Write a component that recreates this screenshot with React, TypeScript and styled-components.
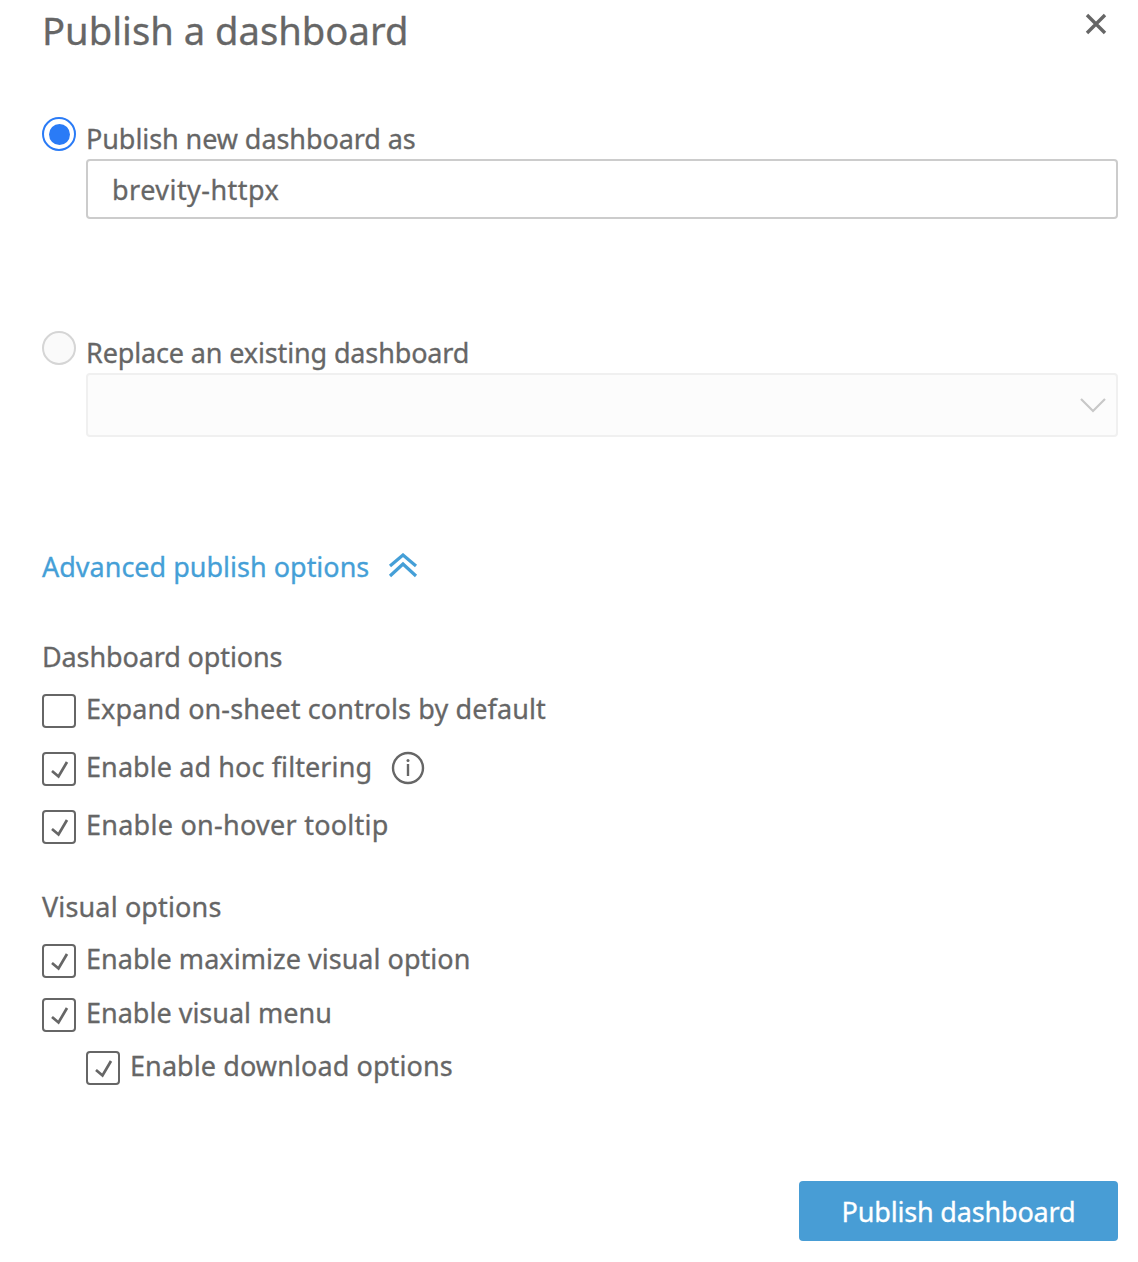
import React from "react";
import styled, { createGlobalStyle } from "styled-components";

const Global = createGlobalStyle`
  html, body { margin: 0; padding: 0; background: #fff; }
  body { font-family: "Noto Sans", "Open Sans", sans-serif; color: #666; -webkit-text-stroke: 0.3px currentColor; }
  button { -webkit-text-stroke: 0.3px currentColor; }
`;

const Page = styled.div`
  width: 1138px;
  height: 1262px;
  box-sizing: border-box;
  padding: 0 20px 0 42px;
  display: flex;
  flex-direction: column;
  overflow: hidden;
`;
const Header = styled.header`
  height: 62px;
  display: flex;
  justify-content: space-between;
  align-items: flex-start;
`;
const Title = styled.h1`
  margin: 0;
  font-size: 38.2px;
  line-height: 60px;
  font-weight: 400;
  color: #666;
`;
const CloseButton = styled.button`
  border: 0;
  background: none;
  padding: 0;
  margin: 13px 11px 0 0;
  width: 22px;
  height: 22px;
  display: block;
`;
const RadioBlock = styled.section<{ $top: number; $height: number }>`
  margin-top: ${(p) => p.$top}px;
  height: ${(p) => p.$height}px;
`;
const Row = styled.label`
  display: flex;
  align-items: flex-start;
  gap: 10px;
`;
const Radio = styled.span<{ $on?: boolean }>`
  width: 34px;
  height: 34px;
  box-sizing: border-box;
  border-radius: 50%;
  flex: none;
  border: 2px solid ${(p) => (p.$on ? "#2a7bf6" : "#d5d5d5")};
  background: ${(p) => (p.$on ? "#fff" : "#fafafa")};
  display: flex;
  align-items: center;
  justify-content: center;
  &::after {
    content: "";
    display: ${(p) => (p.$on ? "block" : "none")};
    width: 21px;
    height: 21px;
    border-radius: 50%;
    background: #2a7bf6;
  }
`;
const LabelText = styled.span<{ $track?: number }>`
  font-size: 27px;
  line-height: 34px;
  letter-spacing: ${(p) => p.$track ?? 0}px;
  color: #666;
  position: relative;
  top: 5px;
  white-space: nowrap;
`;
const Field = styled.div`
  margin: 8px 0 0 44px;
  height: 60px;
  box-sizing: border-box;
  border: 2px solid #ccc;
  border-radius: 4px;
  padding: 0 24px;
  font-size: 27px;
  line-height: 58px;
  letter-spacing: 0.46px;
  color: #666;
`;
const SelectField = styled.div`
  margin: 8px 0 0 44px;
  height: 64px;
  box-sizing: border-box;
  border: 2px solid #f0f0f0;
  border-radius: 4px;
  background: #fcfcfc;
  display: flex;
  align-items: center;
  justify-content: flex-end;
  padding-right: 10px;
`;
const Advanced = styled.a`
  margin-top: 112px;
  display: flex;
  align-items: center;
  gap: 19px;
  height: 34px;
  font-size: 27px;
  color: #459fd7;
`;
const GroupTitle = styled.h2<{ $top: number; $track?: number }>`
  margin: ${(p) => p.$top}px 0 0;
  font-size: 27px;
  line-height: 34px;
  font-weight: 400;
  letter-spacing: ${(p) => p.$track ?? 0}px;
  color: #666;
`;
const CheckRow = styled.div<{ $top: number; $indent?: boolean }>`
  margin: ${(p) => p.$top}px 0 0 ${(p) => (p.$indent ? 44 : 0)}px;
  height: 34px;
  display: flex;
  align-items: center;
  gap: 10px;
`;
const Box = styled.span`
  width: 34px;
  height: 34px;
  box-sizing: border-box;
  border: 2px solid #666;
  border-radius: 4px;
  flex: none;
  display: flex;
  align-items: center;
  justify-content: center;
`;
const CheckText = styled.span<{ $track?: number }>`
  font-size: 27px;
  line-height: 34px;
  letter-spacing: ${(p) => p.$track ?? 0}px;
  color: #666;
  position: relative;
  top: -2px;
  white-space: nowrap;
`;
const Info = styled.span`
  margin-left: 8.5px;
  display: flex;
  position: relative;
  top: -1px;
`;
const Footer = styled.footer`
  margin-top: 96px;
  display: flex;
  justify-content: flex-end;
`;
const Primary = styled.button`
  width: 319px;
  height: 60px;
  border: 0;
  border-radius: 4px;
  background: #489dd5;
  color: #fff;
  font-family: inherit;
  font-size: 27px;
  line-height: 58px;
  letter-spacing: -0.18px;
  padding: 1px 0 0;
`;

const Check = () => (
  <svg width="20" height="20" viewBox="0 0 20 20" fill="none" stroke="#666" strokeWidth="2.7">
    <path d="M3 12 L9.5 17.5 L18 3" />
  </svg>
);

const CheckItem = ({ on = true, top, indent, children }: { on?: boolean; top: number; indent?: boolean; children: React.ReactNode }) => (
  <CheckRow $top={top} $indent={indent}>
    <Box>{on && <Check />}</Box>
    {children}
  </CheckRow>
);

export default function App() {
  return (
    <Page>
      <Global />
      <Header>
        <Title>Publish a dashboard</Title>
        <CloseButton aria-label="Close">
          <svg width="22" height="22" viewBox="0 0 22 22" stroke="#666" strokeWidth="3.4" fill="none">
            <path d="M2 2 L20 20 M20 2 L2 20" />
          </svg>
        </CloseButton>
      </Header>
      <RadioBlock $top={55} $height={158}>
        <Row>
          <Radio $on />
          <LabelText $track={-0.08}>Publish new dashboard as</LabelText>
        </Row>
        <Field>brevity-httpx</Field>
      </RadioBlock>
      <RadioBlock $top={56} $height={106}>
        <Row>
          <Radio />
          <LabelText $track={-0.14}>Replace an existing dashboard</LabelText>
        </Row>
        <SelectField>
          <svg width="26" height="16" viewBox="0 0 26 16" fill="none" stroke="#c8c8c8" strokeWidth="2.2">
            <path d="M1 2 L13 14 L25 2" />
          </svg>
        </SelectField>
      </RadioBlock>
      <Advanced>
        Advanced publish options
        <svg width="30" height="26" viewBox="0 0 30 26" fill="none" stroke="#459fd7" strokeWidth="3.2">
          <path d="M2 13 L15 2 L28 13 M2 23 L15 11 L28 23" />
        </svg>
      </Advanced>
      <GroupTitle $top={57} $track={-0.12}>Dashboard options</GroupTitle>
      <CheckItem on={false} top={20}><CheckText $track={0.11}>Expand on-sheet controls by default</CheckText></CheckItem>
      <CheckItem top={24}>
        <CheckText $track={0.09}>Enable ad hoc filtering</CheckText>
        <Info>
          <svg width="34" height="34" viewBox="0 0 34 34" fill="none" stroke="#666" strokeWidth="2.4">
            <circle cx="17" cy="17" r="15" />
            <path d="M17 13 V25" />
            <circle cx="17" cy="9.5" r="1.5" fill="#666" stroke="none" />
          </svg>
        </Info>
      </CheckItem>
      <CheckItem top={24}><CheckText $track={0.26}>Enable on-hover tooltip</CheckText></CheckItem>
      <GroupTitle $top={46} $track={0.14}>Visual options</GroupTitle>
      <CheckItem top={20}><CheckText $track={0.03}>Enable maximize visual option</CheckText></CheckItem>
      <CheckItem top={20}><CheckText>Enable visual menu</CheckText></CheckItem>
      <CheckItem top={19} indent><CheckText $track={0.09}>Enable download options</CheckText></CheckItem>
      <Footer>
        <Primary>Publish dashboard</Primary>
      </Footer>
    </Page>
  );
}
